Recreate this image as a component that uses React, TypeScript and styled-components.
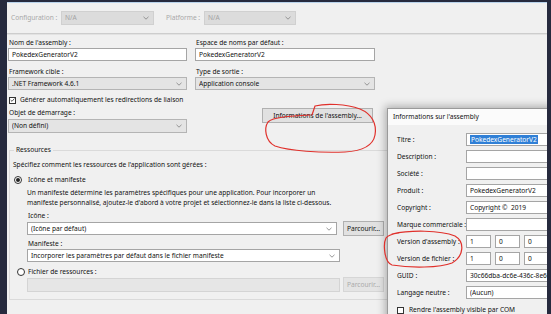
import React from 'react';
import styled, { createGlobalStyle } from 'styled-components';

const GlobalStyle = createGlobalStyle`
  html, body {
    margin: 0;
    padding: 0;
    background: #262a3e;
  }
  body {
    font-family: 'Noto Sans', 'Open Sans', sans-serif;
  }
`;

const Screen = styled.div`
  position: relative;
  width: 551px;
  height: 314px;
  overflow: hidden;
  background: #262a3e;
  padding: 2px 4px 0 7px;
  box-sizing: border-box;
`;

const Window = styled.div`
  position: relative;
  height: 100%;
  box-sizing: border-box;
  background: #f0f0f0;
  border-top: 1px solid #b9d3ec;
  overflow: hidden;
  font-size: 6.6px;
  line-height: 10px;
  color: #111111;
`;

const Toolbar = styled.div`
  display: flex;
  align-items: center;
  height: 14px;
  padding: 8px 0 0 4px;
`;

const ToolLabel = styled.span<{ $w: number }>`
  width: ${p => p.$w}px;
  color: #a8a8a8;
  white-space: nowrap;
`;

const Spacer = styled.span<{ $w: number }>`
  width: ${p => p.$w}px;
`;

const Separator = styled.div`
  height: 0;
  margin-top: 8px;
  border-top: 1px solid #cdcdcd;
  border-bottom: 1px solid #e2e2e2;
`;

const Form = styled.div`
  padding: 3px 0 0 1px;
`;

const Grid = styled.div`
  display: grid;
  grid-template-columns: 179px 180px;
  column-gap: 8px;
`;

const Cell = styled.div<{ $top?: number }>`
  display: flex;
  flex-direction: column;
  margin-top: ${p => p.$top ?? 0}px;
`;

const Label = styled.div<{ $top?: number }>`
  height: 10px;
  margin-top: ${p => p.$top ?? 0}px;
  padding-left: 1px;
  white-space: nowrap;
`;

const TextBox = styled.div<{ $w?: number; $h?: number; $off?: boolean }>`
  display: flex;
  align-items: center;
  width: ${p => (p.$w ? `${p.$w}px` : 'auto')};
  height: ${p => p.$h ?? 13}px;
  box-sizing: border-box;
  padding: 0 3px;
  border: 1px solid ${p => (p.$off ? '#d4d4d4' : '#a5a5a5')};
  background: ${p => (p.$off ? '#e6e6e6' : '#ffffff')};
  white-space: nowrap;
  overflow: hidden;
`;

type ComboKind = 'ro' | 'edit' | 'off';

const ComboBox = styled.div<{ $w?: number; $h?: number; $kind: ComboKind; $top?: number }>`
  display: flex;
  align-items: center;
  width: ${p => (p.$w ? `${p.$w}px` : 'auto')};
  height: ${p => p.$h ?? 13}px;
  margin-top: ${p => p.$top ?? 0}px;
  box-sizing: border-box;
  padding: 0 4px 0 3px;
  border: 1px solid ${p => (p.$kind === 'edit' ? '#a5a5a5' : p.$kind === 'off' ? '#d0d0d0' : '#b4b4b4')};
  background: ${p => (p.$kind === 'edit' ? '#ffffff' : p.$kind === 'off' ? '#dcdcdc' : '#e4e4e4')};
  color: ${p => (p.$kind === 'off' ? '#a3a3a3' : '#111111')};
  white-space: nowrap;
  overflow: hidden;
`;

const ComboText = styled.span`
  flex: 1;
  overflow: hidden;
`;

const Button = styled.div<{ $w: number; $off?: boolean }>`
  display: flex;
  align-items: center;
  justify-content: center;
  width: ${p => p.$w}px;
  height: 15px;
  box-sizing: border-box;
  border: 1px solid ${p => (p.$off ? '#d6d6d6' : '#b0b0b0')};
  background: ${p => (p.$off ? '#e4e4e4' : '#e1e1e1')};
  color: ${p => (p.$off ? '#aaaaaa' : '#111111')};
  white-space: nowrap;
`;

const Row = styled.div<{ $top?: number; $gap?: number; $left?: number; $h?: number }>`
  display: flex;
  align-items: center;
  gap: ${p => p.$gap ?? 4}px;
  margin-top: ${p => p.$top ?? 0}px;
  padding-left: ${p => p.$left ?? 0}px;
  height: ${p => (p.$h ? `${p.$h}px` : 'auto')};
  white-space: nowrap;
`;

const Box = styled.span`
  width: 7px;
  height: 7px;
  box-sizing: border-box;
  border: 1px solid #333;
  background: #fff;
  display: inline-flex;
  align-items: center;
  justify-content: center;
`;

const Radio = styled.span<{ $on?: boolean }>`
  width: 8px;
  height: 8px;
  box-sizing: border-box;
  border-radius: 50%;
  border: 1px solid #333;
  background: #fff;
  display: inline-flex;
  align-items: center;
  justify-content: center;
  &::after {
    content: '';
    width: 4px;
    height: 4px;
    border-radius: 50%;
    background: ${p => (p.$on ? '#222' : 'transparent')};
  }
`;

const ButtonSlot = styled.div`
  display: flex;
  justify-content: flex-end;
  padding: 3px 2px 0 0;
`;

const Group = styled.fieldset`
  margin: 12px 0 0 1px;
  width: 560px;
  padding: 5px 0 7px 2px;
  border: 1px solid #dadada;
  border-right: none;
  min-width: 0;
`;

const Legend = styled.legend`
  margin-left: 2px;
  padding: 0 2px;
  height: 10px;
  line-height: 10px;
`;

const Indent = styled.div`
  padding-left: 15px;
  display: flex;
  flex-direction: column;
`;

const Paragraph = styled.p`
  margin: 3px 0 0 0;
  line-height: 9.5px;
  white-space: nowrap;
`;

const Dialog = styled.div`
  position: absolute;
  left: 380px;
  top: 105px;
  width: 200px;
  height: 230px;
  background: #f0f0f0;
  border: 1px solid #9a9a9a;
  box-shadow: 0 0 8px 2px rgba(0, 0, 0, 0.28);
`;

const TitleBar = styled.div`
  height: 16px;
  display: flex;
  align-items: center;
  padding-left: 5px;
  background: #fbfbfb;
  white-space: nowrap;
`;

const DialogBody = styled.div`
  display: grid;
  grid-template-columns: 69px 1fr;
  grid-auto-rows: 13px;
  row-gap: 4px;
  align-items: center;
  padding: 8px 0 0 9px;
  white-space: nowrap;
`;

const Selected = styled.span`
  background: #2f7fd6;
  color: #ffffff;
  padding: 0 1px;
  line-height: 9px;
`;

const Versions = styled.div`
  display: flex;
  gap: 4px;
`;

const DialogCheck = styled(Row)`
  grid-column: 1 / 3;
  margin-top: 1px;
`;

const Ink = styled.svg`
  position: absolute;
  left: 0;
  top: 0;
  pointer-events: none;
`;

const Chevron = () => (
  <svg width="6" height="4" viewBox="0 0 6 4">
    <polyline points="0.5,0.8 3,3.2 5.5,0.8" fill="none" stroke="#8a8a8a" strokeWidth="0.9" />
  </svg>
);

const Check = () => (
  <svg width="6" height="6" viewBox="0 0 6 6">
    <polyline points="0.8,3 2.4,4.6 5.3,1.2" fill="none" stroke="#222" strokeWidth="0.9" />
  </svg>
);

const Combo: React.FC<{ kind: ComboKind; w?: number; h?: number; top?: number; children?: React.ReactNode }> = ({
  kind,
  w,
  h,
  top,
  children,
}) => (
  <ComboBox $kind={kind} $w={w} $h={h} $top={top}>
    <ComboText>{children}</ComboText>
    <Chevron />
  </ComboBox>
);

const dialogFields: [string, React.ReactNode][] = [
  ['Titre :', <TextBox><Selected>PokedexGeneratorV2</Selected></TextBox>],
  ['Description :', <TextBox />],
  ['Société :', <TextBox />],
  ['Produit :', <TextBox>PokedexGeneratorV2</TextBox>],
  ['Copyright :', <TextBox>Copyright ©&nbsp; 2019</TextBox>],
  ['Marque commerciale :', <TextBox />],
];

const versionParts = ['1', '0', '0', '0'];

const App: React.FC = () => {
  return (
    <>
      <GlobalStyle />
      <Screen>
        <Window>
          <Toolbar>
            <ToolLabel $w={50}>Configuration :</ToolLabel>
            <Combo kind="off" w={93} h={14}>N/A</Combo>
            <Spacer $w={12} />
            <ToolLabel $w={38}>Platforme :</ToolLabel>
            <Combo kind="off" w={92} h={14}>N/A</Combo>
          </Toolbar>
          <Separator />

          <Form>
            <Grid>
              <Cell>
                <Label>Nom de l'assembly :</Label>
                <TextBox>PokedexGeneratorV2</TextBox>
              </Cell>
              <Cell>
                <Label>Espace de noms par défaut :</Label>
                <TextBox>PokedexGeneratorV2</TextBox>
              </Cell>
              <Cell $top={6}>
                <Label>Framework cible :</Label>
                <Combo kind="ro">.NET Framework 4.6.1</Combo>
              </Cell>
              <Cell $top={6}>
                <Label>Type de sortie :</Label>
                <Combo kind="ro">Application console</Combo>
              </Cell>
            </Grid>

            <Row $top={5} $gap={4} $left={1} $h={10}>
              <Box><Check /></Box>
              <span>Générer automatiquement les redirections de liaison</span>
            </Row>

            <Grid>
              <Cell $top={3}>
                <Label>Objet de démarrage :</Label>
                <Combo kind="ro" h={14} top={1}>(Non défini)</Combo>
              </Cell>
              <ButtonSlot>
                <Button $w={111}>Informations de l'assembly...</Button>
              </ButtonSlot>
            </Grid>

            <Group>
              <Legend>Ressources</Legend>
              <Label>Spécifiez comment les ressources de l'application sont gérées :</Label>
              <Row $top={5} $gap={6} $left={2} $h={10}>
                <Radio $on />
                <span>Icône et manifeste</span>
              </Row>
              <Indent>
                <Paragraph>
                  Un manifeste détermine les paramètres spécifiques pour une application. Pour incorporer un
                  <br />
                  manifeste personnalisé, ajoutez-le d'abord à votre projet et sélectionnez-le dans la liste ci-dessous.
                </Paragraph>
                <Label $top={4}>Icône :</Label>
                <Row $gap={6}>
                  <Combo kind="edit" w={310}>(Icône par défaut)</Combo>
                  <Button $w={41}>Parcourir...</Button>
                </Row>
                <Label $top={3}>Manifeste :</Label>
                <Combo kind="edit" w={313}>Incorporer les paramètres par défaut dans le fichier manifeste</Combo>
              </Indent>
              <Row $top={5} $gap={3} $left={5} $h={10}>
                <Radio />
                <span>Fichier de ressources :</span>
              </Row>
              <Indent>
                <Row $gap={3}>
                  <TextBox $w={313} $h={14} $off />
                  <Button $w={41} $off>Parcourir...</Button>
                </Row>
              </Indent>
            </Group>
          </Form>

          <Dialog>
            <TitleBar>Informations sur l'assembly</TitleBar>
            <DialogBody>
              {dialogFields.map(([label, field]) => (
                <React.Fragment key={label}>
                  <span>{label}</span>
                  {field}
                </React.Fragment>
              ))}
              <span>Version d'assembly :</span>
              <Versions>
                {versionParts.map((v, i) => (
                  <TextBox key={i} $w={25}>{v}</TextBox>
                ))}
              </Versions>
              <span>Version de fichier :</span>
              <Versions>
                {versionParts.map((v, i) => (
                  <TextBox key={i} $w={25}>{v}</TextBox>
                ))}
              </Versions>
              <span>GUID :</span>
              <TextBox>30c66dba-dc6e-436c-8e6c-4f0b</TextBox>
              <span>Langage neutre :</span>
              <Combo kind="edit">(Aucun)</Combo>
              <DialogCheck $gap={5}>
                <Box />
                <span>Rendre l'assembly visible par COM</span>
              </DialogCheck>
            </DialogBody>
          </Dialog>
        </Window>

        <Ink width="551" height="314" viewBox="0 0 551 314">
          <path
            d="M312 115 L315 106 C326 103 346 104 360 109 C372 114 377 124 375 135 C373 146 362 151 345 152 C320 153 290 151 275 146 C265 141 264 128 268 122 C273 117 290 116 310 115"
            fill="none"
            stroke="#e0302b"
            strokeWidth="1.2"
            strokeLinecap="round"
          />
          <path
            d="M392 234 C410 230 440 230 455 236 C465 242 464 256 452 263 C440 268 410 268 392 265 C384 262 383 244 386 238 C388 235 392 234 399 233"
            fill="none"
            stroke="#e0302b"
            strokeWidth="1.2"
            strokeLinecap="round"
          />
        </Ink>
      </Screen>
    </>
  );
};

export default App;
